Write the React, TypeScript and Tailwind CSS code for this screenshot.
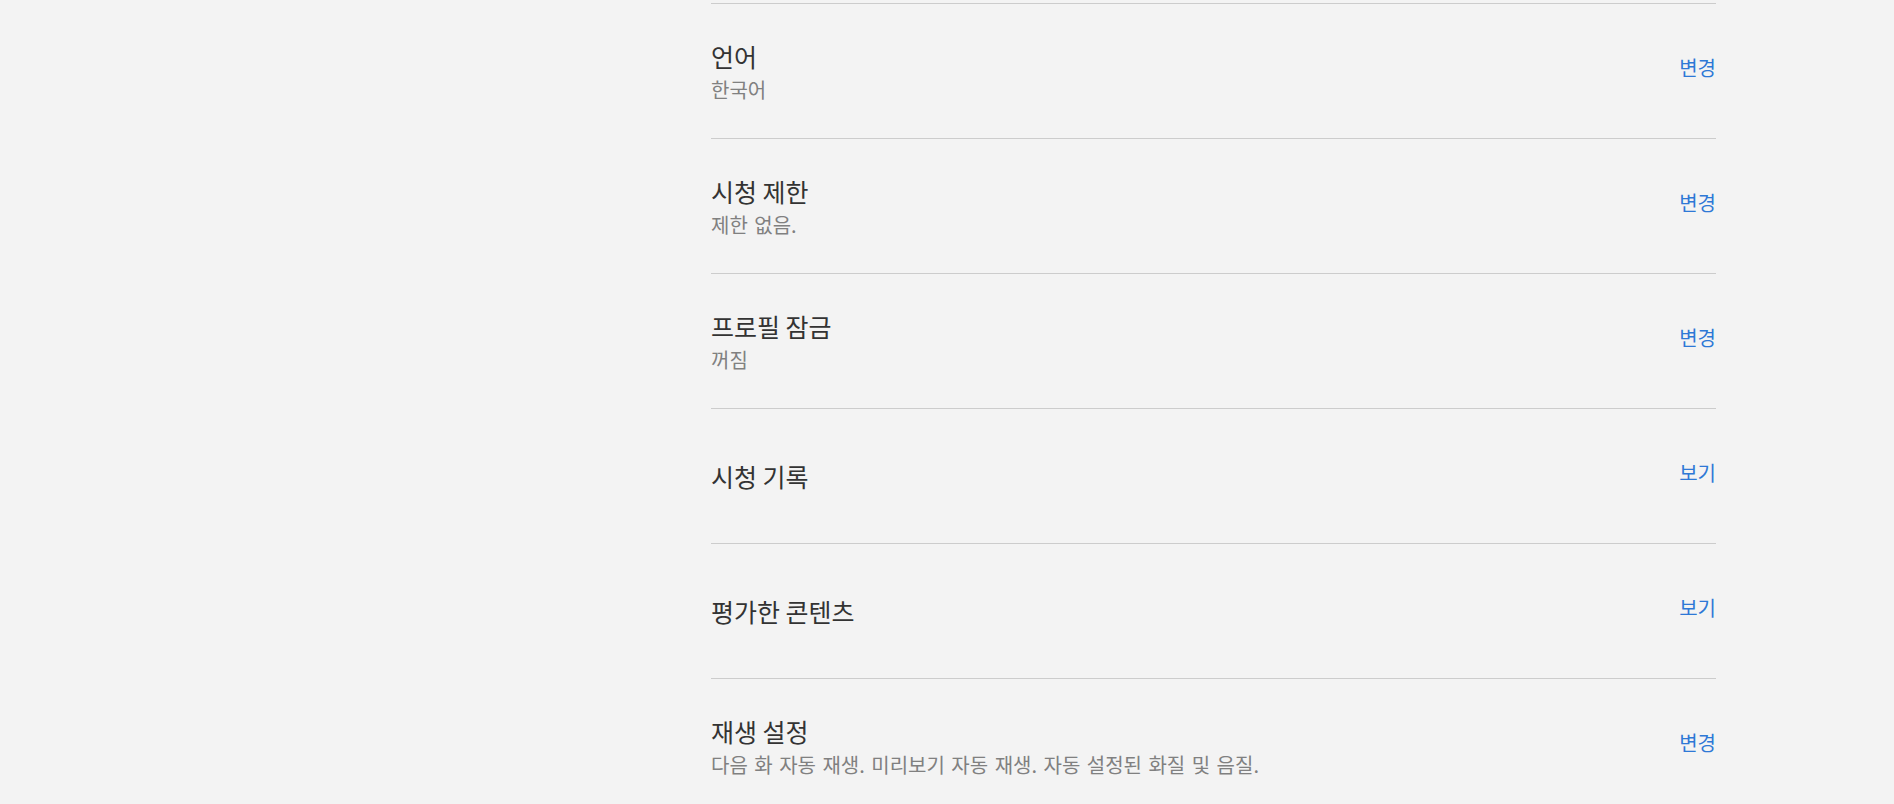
const rows = [
  { title: "언어", desc: "한국어", action: "변경" },
  { title: "시청 제한", desc: "제한 없음.", action: "변경" },
  { title: "프로필 잠금", desc: "꺼짐", action: "변경" },
  { title: "시청 기록", desc: "", action: "보기" },
  { title: "평가한 콘텐츠", desc: "", action: "보기" },
  { title: "재생 설정", desc: "다음 화 자동 재생. 미리보기 자동 재생. 자동 설정된 화질 및 음질.", action: "변경" },
]

export default function App() {
  return (
    <div
      className="h-[804px] overflow-hidden bg-[#f3f3f3] flex"
      style={{ fontFamily: '"Noto Sans CJK KR", "Noto Sans", sans-serif' }}
    >
      {/* Sidebar space */}
      <div className="w-[711px] shrink-0" />

      {/* Settings list */}
      <div className="w-[1005px] pt-[3px]">
        {rows.map((row) => (
          <div
            key={row.title}
            className="h-[135px] border-t border-[#cccccc] flex items-center justify-between"
          >
            <div className="flex flex-col">
              <div className="text-[25px] leading-[38px] text-[#333333]">{row.title}</div>
              {row.desc && (
                <div className="text-[20px] leading-[30px] text-[#808080] [word-spacing:2px]">
                  {row.desc}
                </div>
              )}
            </div>
            <a href="#" className="text-[20px] leading-[30px] text-[#2e78d6] mb-[6px]">
              {row.action}
            </a>
          </div>
        ))}
      </div>
    </div>
  )
}
